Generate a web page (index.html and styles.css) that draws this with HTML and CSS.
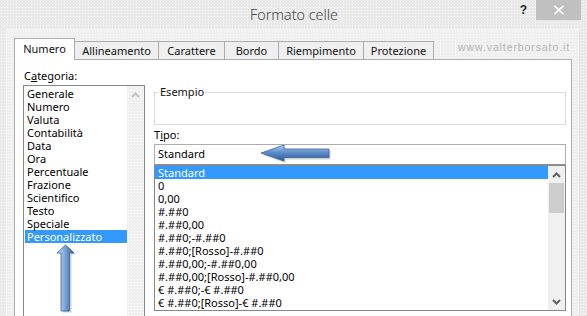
FILE: index.html
```html
<!DOCTYPE html>
<html lang="it">
<head>
<meta charset="utf-8">
<title>Formato celle</title>
<link rel="stylesheet" href="styles.css">
</head>
<body>
<div class="window">
  <div class="titlebar">
    <div class="tb-left"></div>
    <div class="title">Formato celle</div>
    <div class="tb-right">
      <span class="help">?</span>
      <span class="close"><svg width="12" height="10" viewBox="0 0 12 10"><path d="M1.5 0.8 L10.5 9.2 M10.5 0.8 L1.5 9.2" stroke="#fff" stroke-width="1.6" fill="none"/></svg></span>
    </div>
  </div>
  <div class="dialog">
    <div class="tabrow">
      <div class="tabs">
        <div class="tab active w1">Numero</div>
        <div class="tab w2">Allineamento</div>
        <div class="tab w3">Carattere</div>
        <div class="tab w4">Bordo</div>
        <div class="tab w5">Riempimento</div>
        <div class="tab w6">Protezione</div>
      </div>
      <div class="watermark">www.valterborsato.it</div>
    </div>
    <div class="panel">
      <div class="leftcol">
        <div class="label">C<u>a</u>tegoria:</div>
        <div class="catlist">
          <ul class="items">
            <li>Generale</li>
            <li>Numero</li>
            <li>Valuta</li>
            <li>Contabilità</li>
            <li>Data</li>
            <li>Ora</li>
            <li>Percentuale</li>
            <li>Frazione</li>
            <li>Scientifico</li>
            <li>Testo</li>
            <li>Speciale</li>
            <li class="sel">Personalizzato</li>
          </ul>
          <div class="vscroll disabled">
            <div class="sbtn"><svg width="9" height="6" viewBox="0 0 9 6"><path d="M1 5 L4.5 1.5 L8 5" stroke="#c4c4c4" stroke-width="2" fill="none"/></svg></div>
          </div>
        </div>
      </div>
      <div class="rightcol">
        <fieldset class="group">
          <legend>Esempio</legend>
          <div class="group-body"></div>
        </fieldset>
        <div class="label tipo">T<u>i</u>po:</div>
        <div class="input">Standard</div>
        <div class="typelist">
          <ul class="items">
            <li class="sel">Standard</li>
            <li>0</li>
            <li>0,00</li>
            <li>#.##0</li>
            <li>#.##0,00</li>
            <li>#.##0;-#.##0</li>
            <li>#.##0;[Rosso]-#.##0</li>
            <li>#.##0,00;-#.##0,00</li>
            <li>#.##0,00;[Rosso]-#.##0,00</li>
            <li>€ #.##0;-€ #.##0</li>
            <li>€ #.##0;[Rosso]-€ #.##0</li>
          </ul>
          <div class="vscroll">
            <div class="sbtn"><svg width="9" height="6" viewBox="0 0 9 6"><path d="M1 5 L4.5 1.5 L8 5" stroke="#606060" stroke-width="2" fill="none"/></svg></div>
            <div class="track"><div class="thumb"></div></div>
            <div class="sbtn"><svg width="9" height="6" viewBox="0 0 9 6"><path d="M1 1 L4.5 4.5 L8 1" stroke="#606060" stroke-width="2" fill="none"/></svg></div>
          </div>
        </div>
      </div>
    </div>
  </div>

  <svg class="arrow arrow-left" width="80" height="24" viewBox="0 0 80 24">
    <defs>
      <linearGradient id="gl" x1="0" y1="0" x2="0" y2="1">
        <stop offset="0" stop-color="#b7d0ef"/>
        <stop offset="0.45" stop-color="#5f8fcb"/>
        <stop offset="1" stop-color="#2b5892"/>
      </linearGradient>
    </defs>
    <polygon points="4,12 27,4 27,8 72,8 72,16.5 27,16.5 27,20" fill="#000" opacity="0.18" transform="translate(1.5,2)"/>
    <polygon points="4,12 27,4 27,8 72,8 72,16.5 27,16.5 27,20" fill="url(#gl)" stroke="#3a639a" stroke-width="0.8"/>
  </svg>

  <svg class="arrow arrow-up" width="24" height="72" viewBox="0 0 24 72">
    <defs>
      <linearGradient id="gu" x1="0" y1="0" x2="1" y2="0">
        <stop offset="0" stop-color="#d4e4f8"/>
        <stop offset="0.45" stop-color="#7ea7dc"/>
        <stop offset="1" stop-color="#2f5d98"/>
      </linearGradient>
    </defs>
    <polygon points="10.5,2 19,10 14.5,10 14.5,68 6,68 6,10 2,10" fill="#000" opacity="0.18" transform="translate(2,1.5)"/>
    <polygon points="10.5,2 19,10 14.5,10 14.5,68 6,68 6,10 2,10" fill="url(#gu)" stroke="#3a639a" stroke-width="0.8"/>
  </svg>
</div>
</body>
</html>
```

FILE: styles.css
```css
* { box-sizing: border-box; }

html, body {
  margin: 0;
  padding: 0;
}

body {
  width: 587px;
  height: 316px;
  overflow: hidden;
  font-family: "Noto Sans", "DejaVu Sans", sans-serif;
  font-size: 11px;
  color: #000;
}

.window {
  position: relative;
  width: 587px;
  height: 316px;
  overflow: hidden;
  background-color: #e9e9e9;
  background-image: radial-gradient(circle, #f8f8f8 0.7px, transparent 0.9px);
  background-size: 3px 3px;
}

.titlebar {
  height: 29px;
  display: grid;
  grid-template-columns: 1fr auto 1fr;
  align-items: start;
}

.title {
  font-size: 14.3px;
  font-weight: 300;
  color: #444;
  line-height: 20px;
  padding-top: 5px;
  padding-left: 1px;
}

.tb-right {
  display: flex;
  justify-content: flex-end;
  align-items: flex-start;
  padding-right: 6px;
}

.help {
  font-family: "Liberation Sans", sans-serif;
  font-weight: bold;
  font-size: 12px;
  line-height: 14px;
  color: #222;
  margin-top: 3px;
  margin-right: 9px;
}

.close {
  width: 45px;
  height: 20px;
  background: #c0c0c0;
  display: flex;
  align-items: center;
  justify-content: center;
}

.dialog {
  margin-left: 6px;
  width: 574px;
  height: 287px;
  padding-left: 7px;
  padding-top: 8px;
  background-color: #efefef;
  background-image: radial-gradient(circle, #fbfbfb 0.7px, transparent 0.9px);
  background-size: 3px 3px;
  border-top: 1px solid #f6f6f6;
  border-left: 1px solid #f6f6f6;
  border-right: 1px solid #e2e2e2;
}

.tabrow {
  display: flex;
  align-items: flex-end;
  height: 21px;
  width: 558px;
}

.tabs {
  display: flex;
  align-items: flex-end;
  height: 21px;
}

.tab {
  height: 18px;
  border: 1px solid #acacac;
  border-bottom: none;
  margin-right: -1px;
  background: #efefef;
  text-align: center;
  line-height: 17px;
  color: #111;
}

.tab.active {
  position: relative;
  z-index: 2;
  height: 22px;
  margin-bottom: -1px;
  background: #fff;
  line-height: 20px;
}

.w1 { width: 61px; }
.w2 { width: 85px; }
.w3 { width: 67px; }
.w4 { width: 55px; }
.w5 { width: 86px; }
.w6 { width: 71px; }

.watermark {
  margin-left: auto;
  margin-right: 2px;
  align-self: center;
  font-family: "Liberation Sans", sans-serif;
  font-size: 10.5px;
  letter-spacing: 0.9px;
  color: #b4b4b4;
  padding-bottom: 4px;
}

.panel {
  position: relative;
  z-index: 1;
  width: 558px;
  height: 270px;
  background: #fff;
  border: 1px solid #acacac;
  border-bottom: none;
  display: grid;
  grid-template-columns: 122px 412px;
  column-gap: 9px;
  padding: 8px 0 0 8px;
  align-items: start;
}

.label {
  line-height: 16px;
  height: 16px;
  padding-left: 1px;
}

.label u { text-decoration-thickness: 1px; text-underline-offset: 1px; }

ul.items {
  list-style: none;
  margin: 0;
  padding: 0;
  flex: 1;
  min-width: 0;
}

ul.items li {
  height: 13px;
  line-height: 13px;
  white-space: nowrap;
}

ul.items li.sel {
  background: #3399ff;
  color: #fff;
}

.catlist {
  margin-top: 1px;
  height: 240px;
  border: 1px solid #828790;
  border-bottom: none;
  display: flex;
}

.catlist ul.items {
  padding-top: 1px;
  padding-left: 1px;
}

.catlist ul.items li {
  padding-left: 2px;
}

.vscroll {
  width: 17px;
  display: flex;
  flex-direction: column;
  background: #f0f0f0;
}

.vscroll.disabled {
  background-color: #f0f0f0;
  background-image: radial-gradient(circle, #ffffff 0.7px, transparent 0.9px);
  background-size: 3px 3px;
}

.sbtn {
  height: 17px;
  flex: none;
  display: flex;
  align-items: center;
  justify-content: center;
}

.track {
  flex: 1;
  padding-top: 0;
}

.thumb {
  height: 30px;
  background: #cdcdcd;
  margin: 0 1px;
}

.rightcol {
  padding-top: 17px;
  display: flex;
  flex-direction: column;
}

.group {
  margin: 0;
  padding: 0 4px;
  border: 1px solid #dcdcdc;
  width: 412px;
  min-width: 0;
}

.group legend {
  padding: 0 1px;
  line-height: 14px;
  color: #111;
}

.group-body {
  height: 25px;
}

.tipo {
  margin-top: 3px;
  line-height: 14px;
  height: 14px;
  padding-left: 0;
}

.input {
  margin-top: 2px;
  height: 21px;
  border: 1px solid #abadb3;
  border-bottom-color: #8e8f8f;
  padding-left: 3px;
  line-height: 18px;
}

.typelist {
  margin-top: 0;
  height: 146px;
  border: 1px solid #828790;
  display: flex;
}

.typelist ul.items li {
  padding-left: 3px;
}

.arrow {
  position: absolute;
  z-index: 10;
}

.arrow-left {
  left: 257px;
  top: 141px;
}

.arrow-up {
  left: 55px;
  top: 243px;
}
```
